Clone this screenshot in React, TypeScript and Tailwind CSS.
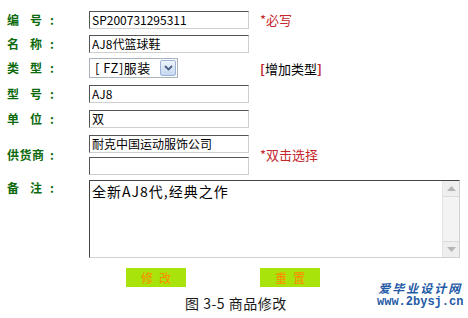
import type { ReactNode } from 'react';

const font = { fontFamily: '"Noto Sans CJK SC", "Liberation Sans", sans-serif' };

function Label({ chars }: { chars: string[] }) {
  return (
    <div className="w-[82px] shrink-0 flex items-center font-bold text-[12px] leading-[14px] text-[#0c6a0c]">
      <span className={`flex justify-between ${chars.length === 3 ? 'w-[37px]' : 'w-[35px]'}`}>
        {chars.map((c) => (
          <span key={c}>{c}</span>
        ))}
      </span>
      <span className={chars.length === 3 ? 'ml-[6px]' : 'ml-[8px]'}>:</span>
    </div>
  );
}

function Field({ value = '' }: { value?: string }) {
  return (
    <div className="w-[160px] h-[18px] shrink-0 border border-t-[#555] border-l-[#555] border-r-[#cfcfcf] border-b-[#cfcfcf] bg-white px-[2px] text-[12px] leading-[16px] text-black whitespace-nowrap overflow-hidden">
      {value}
    </div>
  );
}

function Note({ children, className = '' }: { children: ReactNode; className?: string }) {
  return <div className={`text-[13px] leading-[16px] text-[#c3262c] whitespace-nowrap ${className}`}>{children}</div>;
}

function Row({ label, children, className = '' }: { label: string[]; children: ReactNode; className?: string }) {
  return (
    <div className={`flex items-center ${className}`}>
      <Label chars={label} />
      {children}
    </div>
  );
}

export default function App() {
  return (
    <div className="relative w-[468px] h-[318px] bg-white overflow-hidden" style={font}>
      <div className="flex flex-col pt-[11px] pl-[7px]">
        <Row label={['编', '号']}>
          <Field value="SP200731295311" />
          <Note className="ml-[11px]">*必写</Note>
        </Row>

        <Row label={['名', '称']} className="mt-[6px]">
          <Field value="AJ8代篮球鞋" />
        </Row>

        <Row label={['类', '型']} className="mt-[5px]">
          <div className="w-[171px] shrink-0">
            <div className="w-[89px] h-[20px] border border-[#a9b2bd] bg-white flex items-center justify-between pl-[5px] pr-[1px] text-[13px] leading-[16px] text-black">
              <span className="whitespace-nowrap tracking-[0.5px]">[ FZ]服装</span>
              <span className="w-[16px] h-[16px] rounded-[2px] border border-[#9bb3d6] bg-gradient-to-b from-[#eef4fc] to-[#c6d8f1] flex items-center justify-center">
                <svg width="9" height="6" viewBox="0 0 9 6">
                  <path d="M1 1 L4.5 4.5 L8 1" fill="none" stroke="#4d6185" strokeWidth="1.8" />
                </svg>
              </span>
            </div>
          </div>
          <div className="text-[13px] leading-[16px] whitespace-nowrap text-black mt-[2px]">
            <span className="font-bold text-[#c3262c]">[</span>增加类型<span className="font-bold text-[#c3262c]">]</span>
          </div>
        </Row>

        <Row label={['型', '号']} className="mt-[7px]">
          <Field value="AJ8" />
        </Row>

        <Row label={['单', '位']} className="mt-[7px]">
          <Field value="双" />
        </Row>

        <Row label={['供', '货', '商']} className="mt-[7px]">
          <div className="flex flex-col gap-[4px] w-[171px] shrink-0">
            <Field value="耐克中国运动服饰公司" />
            <Field />
          </div>
          <Note>*双击选择</Note>
        </Row>

        <div className="flex items-start mt-[5px]">
          <div className="pt-[1px]">
            <Label chars={['备', '注']} />
          </div>
          <div className="w-[371px] h-[78px] flex border border-t-[#444] border-l-[#444] border-r-[#d0d0d0] border-b-[#d0d0d0] bg-white">
            <div className="flex-1 px-[2px] pt-[1px] text-[14px] leading-[18px] tracking-[1px] text-black">全新AJ8代,经典之作</div>
            <div className="w-[17px] flex flex-col justify-between bg-[#f3f3f3] border-l border-[#e4e4e4]">
              <div className="h-[16px] flex items-center justify-center bg-[#eeeeee] border-b border-[#dcdcdc]">
                <svg width="9" height="5" viewBox="0 0 9 5">
                  <path d="M0 5 L4.5 0 L9 5 Z" fill="#b5b5b5" />
                </svg>
              </div>
              <div className="h-[16px] flex items-center justify-center bg-[#eeeeee] border-t border-[#dcdcdc]">
                <svg width="9" height="5" viewBox="0 0 9 5">
                  <path d="M0 0 L4.5 5 L9 0 Z" fill="#b5b5b5" />
                </svg>
              </div>
            </div>
          </div>
        </div>

        <div className="flex mt-[10px] pl-[119px]">
          <div className="w-[60px] h-[19px] bg-[#a8e30c] text-[#ff8a00] text-[12px] leading-[19px] text-center tracking-[6px] pl-[6px]">修改</div>
          <div className="ml-[74px] w-[60px] h-[19px] bg-[#a8e30c] text-[#ff8a00] text-[12px] leading-[19px] text-center tracking-[6px] pl-[6px]">重置</div>
        </div>

        <div className="mt-[8px] pl-[178px] text-[14px] leading-[16px] tracking-[0.5px] text-[#1a1a1a] whitespace-nowrap">图 3-5 商品修改</div>
      </div>

      <div className="absolute left-[377px] top-[281px] flex flex-col items-center gap-[1px] text-[#1f5aa6]">
        <span className="text-[12px] leading-[14px] font-bold tracking-[2px] italic">爱毕业设计网</span>
        <span className="text-[12px] leading-[13px] font-bold" style={{ fontFamily: '"Liberation Mono", monospace' }}>www.2bysj.cn</span>
      </div>
    </div>
  );
}
